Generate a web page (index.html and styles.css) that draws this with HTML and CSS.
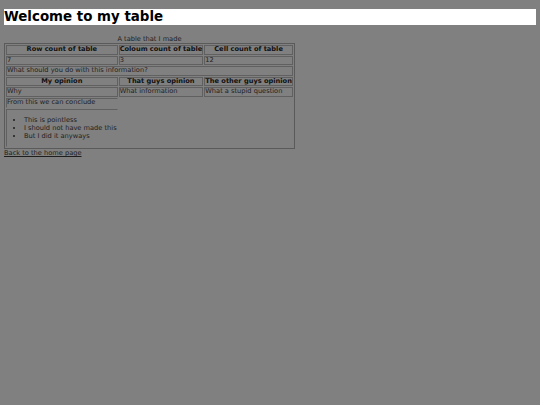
FILE: index.html
```html
<!DOCTYPE html>
<html>
<head>
<meta charset="utf-8">
<link rel="stylesheet" href="styles.css">
</head>
<body>
<h1 class="title">Welcome to my table</h1>
<table class="info">
  <caption>A table that I made</caption>
  <tr><th>Row count of table</th><th>Coloum count of table</th><th>Cell count of table</th></tr>
  <tr><td>7</td><td>3</td><td>12</td></tr>
  <tr><td colspan="3">What should you do with this information?</td></tr>
  <tr><th>My opinion</th><th>That guys opinion</th><th>The other guys opinion</th></tr>
  <tr><td>Why</td><td>What information</td><td>What a stupid question</td></tr>
  <tr><td class="open">From this we can conclude</td></tr>
  <tr><td class="open list-cell"><ul class="points"><li>This is pointless</li><li>I should not have made this</li><li>But I did it anyways</li></ul></td></tr>
</table>
<a class="home" href="#">Back to the home page</a>
</body>
</html>
```
FILE: styles.css
```css
html { background: #808080; }
body {
  margin: 4px;
  background: #808080;
  font-family: "DejaVu Sans", sans-serif;
  font-size: 6.65px;
  color: #1e1e1e;
}
.title {
  margin: 5px 0 8px;
  background: #ffffff;
  color: #000;
  font-size: 13.4px;
  line-height: 16px;
  font-weight: bold;
}
.info {
  border: 1px solid #5a5a5a;
  border-spacing: 1px;
}
.info caption {
  line-height: 8px;
  padding-top: 2px;
}
.info th, .info td {
  border: 1px solid #606060;
  padding: 0;
  line-height: 7.6px;
  text-align: left;
}
.info th {
  text-align: center;
  color: #111;
}
.info td.open {
  border-right-color: transparent;
  border-bottom-color: transparent;
}
.points {
  margin: 6px 0 6px;
  padding-left: 17px;
  line-height: 8.3px;
}
.home {
  color: #1e1e1e;
  line-height: 9px;
}
```
